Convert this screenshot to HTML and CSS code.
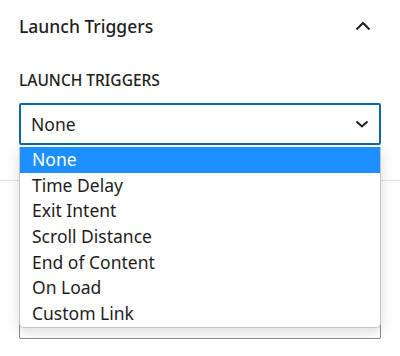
FILE: index.html
```html
<!DOCTYPE html>
<html lang="en">
<head>
    <meta charset="UTF-8">
    <meta name="viewport" content="width=device-width, initial-scale=1.0">
    <title>Launch Triggers</title>
    <link rel="stylesheet" href="styles.css">
</head>
<body>
    <div class="panel">
        <div class="panel-header">
            <h2>Launch Triggers</h2>
            <svg class="chevron-up" width="16" height="10" viewBox="0 0 16 10">
                <path d="M1.5 8.5 L8 2 L14.5 8.5" fill="none" stroke="#1e1e1e" stroke-width="2"/>
            </svg>
        </div>
        <div class="panel-body">
            <label class="field-label">LAUNCH TRIGGERS</label>
            <div class="select-wrap">
                <div class="select">
                    <span>None</span>
                    <svg class="chevron-down" width="14" height="8" viewBox="0 0 14 8">
                        <path d="M1.5 1.5 L7 6.5 L12.5 1.5" fill="none" stroke="#1e1e1e" stroke-width="2"/>
                    </svg>
                </div>
                <ul class="options">
                    <li class="selected">None</li>
                    <li>Time Delay</li>
                    <li>Exit Intent</li>
                    <li>Scroll Distance</li>
                    <li>End of Content</li>
                    <li>On Load</li>
                    <li>Custom Link</li>
                </ul>
            </div>
        </div>
    </div>
    <div class="panel next">
        <div class="under-box"></div>
    </div>
</body>
</html>
```
FILE: styles.css
```css
body {
    margin: 0;
    background-color: #ffffff;
    font-family: "Noto Sans", "Open Sans", sans-serif;
    color: #1e1e1e;
}
.panel {
    border-bottom: 1px solid #e0e0e0;
}
.panel-header {
    display: flex;
    align-items: center;
    justify-content: space-between;
    height: 52px;
    padding: 0 29px 0 19px;
}
.panel-header h2 {
    margin: 0;
    font-size: 17.5px;
    font-weight: 500;
}
.panel-body {
    padding: 18px 19px 35px 19px;
}
.field-label {
    display: block;
    font-size: 15.5px;
    font-weight: 500;
    line-height: 20px;
    margin-bottom: 13px;
}
.select-wrap {
    position: relative;
}
.select {
    box-sizing: border-box;
    height: 42px;
    border: 2px solid #0b6aa2;
    border-radius: 2px;
    display: flex;
    align-items: center;
    justify-content: space-between;
    padding: 0 10px 0 10px;
    font-size: 17.5px;
}
.options {
    position: absolute;
    top: 44px;
    left: 0;
    right: 0;
    margin: 0;
    padding: 0;
    list-style: none;
    background-color: #ffffff;
    border: 1px solid #c4c4c4;
    border-top: none;
    border-radius: 0 0 5px 5px;
    box-shadow: 0 4px 14px rgba(0, 0, 0, 0.14);
    overflow: hidden;
    z-index: 2;
}
.options li {
    height: 25.7px;
    line-height: 25.7px;
    padding-left: 12px;
    font-size: 17.5px;
}
.options li.selected {
    background-color: #1e8fff;
    color: #ffffff;
}
.next {
    border-bottom: none;
    padding: 115px 19px 0 19px;
}
.under-box {
    height: 41px;
    border: 1px solid #8c8c8c;
    border-radius: 2px;
}
```
